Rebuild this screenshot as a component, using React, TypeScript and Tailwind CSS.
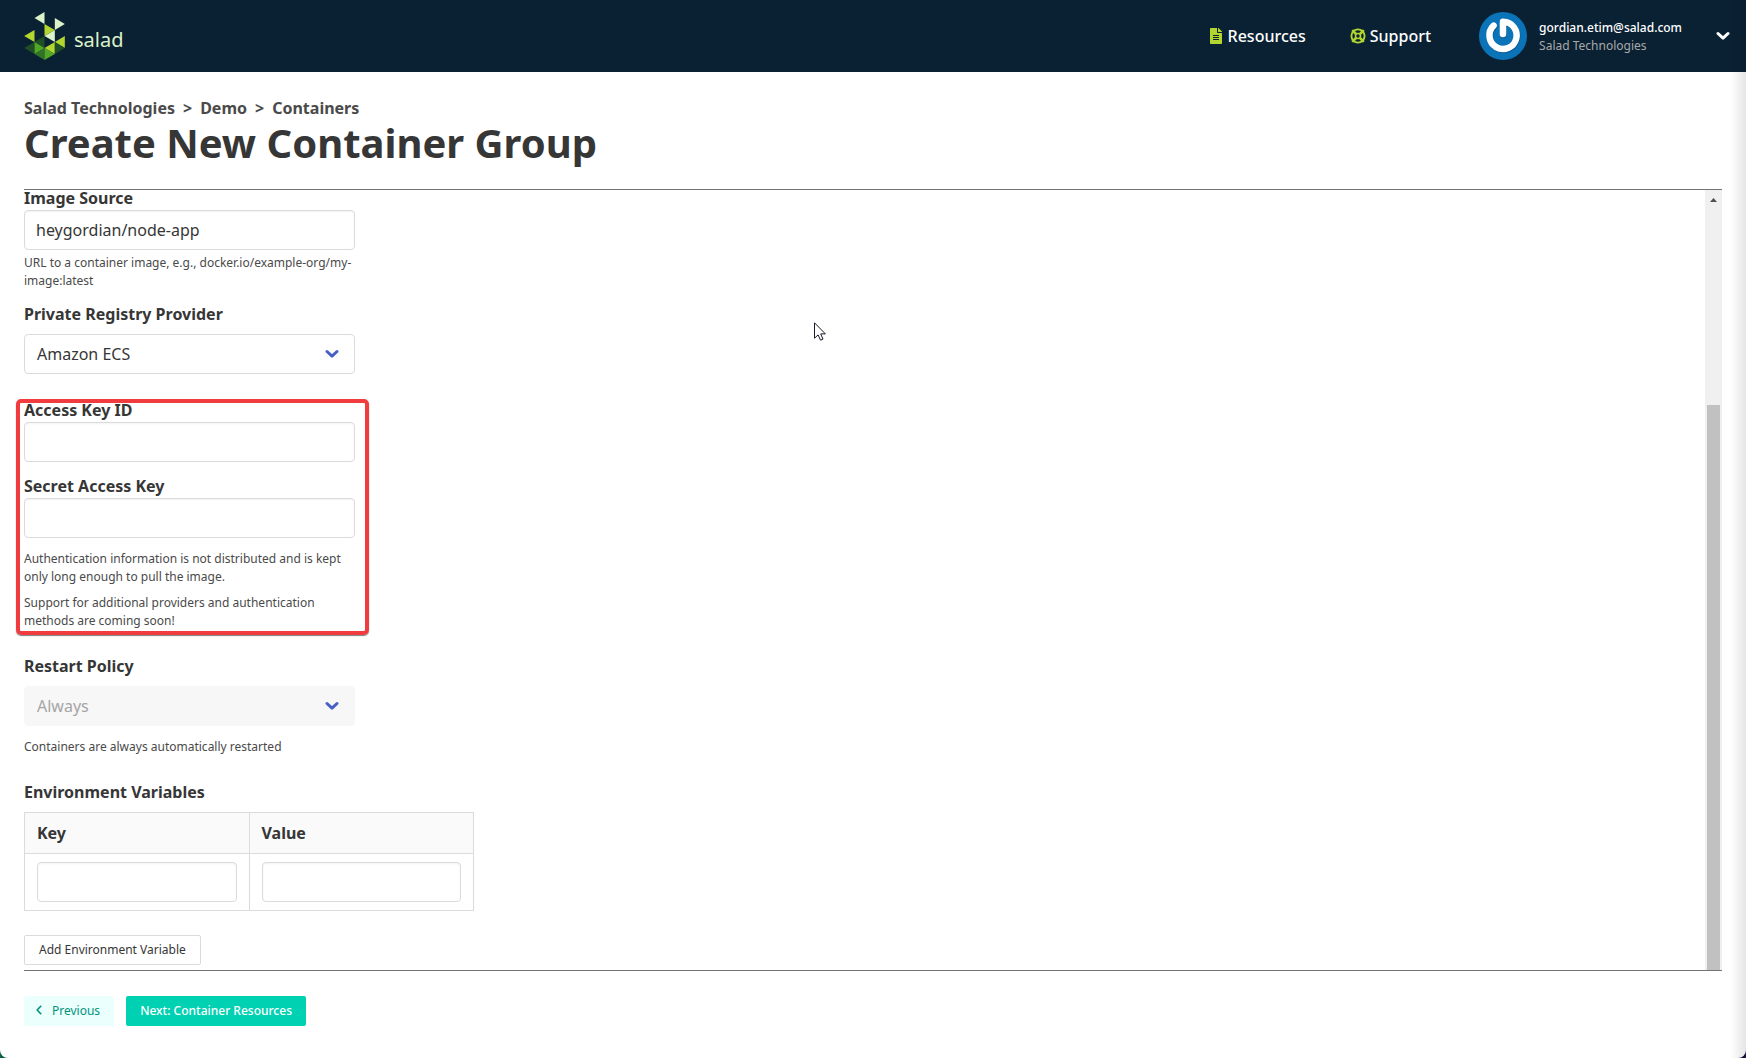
import type { ReactNode } from 'react';
import { FaFileAlt } from 'react-icons/fa';

function Logo() {
  return (
    <svg viewBox="0 0 122 144" className="h-12 w-[41px]" aria-hidden="true">
      <g fill="#dcf2c8">
        <path d="M61 0V36L31 18z" />
        <path d="M92 18V54L122 36z" />
        <path d="M92 54V90L61 72z" />
      </g>
      <g fill="#b2d530">
        <path d="M61 36V72L92 54z" />
        <path d="M31 54V90L0 72z" />
        <path d="M122 72V108L92 90z" />
        <path d="M92 90V126L61 108z" />
      </g>
      <g fill="#1f4f24">
        <path d="M61 72V108L31 90z" />
        <path d="M31 90V126L0 108z" />
        <path d="M92 90V126L122 108z" />
      </g>
      <path d="M61 108V144L31 126z" fill="#2f7426" />
      <g fill="#53a626">
        <path d="M31 90V126L61 108z" />
        <path d="M61 108V144L92 126z" />
      </g>
    </svg>
  );
}

function LifeRing() {
  return (
    <svg viewBox="0 0 16 16" className="size-4 text-[#b2d530]" fill="none" stroke="currentColor" aria-hidden="true">
      <circle cx="8" cy="8" r="6.6" strokeWidth="1.9" />
      <circle cx="8" cy="8" r="2.5" strokeWidth="1.6" />
      <path d="M2.2 2.2L6 6M13.8 2.2L10 6M2.2 13.8L6 10M13.8 13.8L10 10" strokeWidth="2.6" />
    </svg>
  );
}

function Avatar() {
  return (
    <svg viewBox="0 0 48 48" className="size-12" aria-hidden="true">
      <circle cx="24" cy="24" r="24" fill="#0b74b8" />
      <g fill="none" strokeLinecap="round" strokeLinejoin="round" strokeWidth="6.5">
        <path d="M14.6 13.6A13.6 13.6 0 1 0 24 9.8V22" stroke="#075a91" transform="translate(0.6 1)" />
        <path d="M14.6 13.6A13.6 13.6 0 1 0 24 9.8V22" stroke="#fff" />
      </g>
    </svg>
  );
}

function Chevron({ className }: { className: string }) {
  return (
    <svg viewBox="0 0 14 10" className={className} fill="none" stroke="currentColor" strokeWidth="3" strokeLinecap="round" strokeLinejoin="round" aria-hidden="true">
      <path d="M2 2.5L7 7.2L12 2.5" />
    </svg>
  );
}

function Label({ htmlFor, children }: { htmlFor: string; children: ReactNode }) {
  return (
    <label htmlFor={htmlFor} className="block text-base/4 font-bold text-[#363636]">
      {children}
    </label>
  );
}

const inputClass =
  'block h-10 w-full rounded border border-[#dbdbdb] bg-white px-[11px] text-base text-[#363636] shadow-[inset_0_1px_2px_rgba(10,10,10,0.05)]';

function TextField({ id, label, value }: { id: string; label: string; value?: string }) {
  return (
    <div className="flex flex-col gap-1">
      <Label htmlFor={id}>{label}</Label>
      <input id={id} type="text" defaultValue={value} className={inputClass} />
    </div>
  );
}

function SelectField({ id, label, value, disabled }: { id: string; label: string; value: string; disabled?: boolean }) {
  return (
    <div className="flex flex-col gap-3">
      <Label htmlFor={id}>{label}</Label>
      <div className="relative">
        <select
          id={id}
          disabled={disabled}
          className="block h-10 w-full appearance-none rounded border border-[#dbdbdb] bg-white px-3 text-base text-[#363636] disabled:border-[#f7f7f7] disabled:bg-[#f7f7f7] disabled:text-[#a5a5a5] disabled:opacity-100"
        >
          <option>{value}</option>
        </select>
        <Chevron className="pointer-events-none absolute top-[15px] right-4 h-[10px] w-[14px] text-[#485fc7]" />
      </div>
    </div>
  );
}

function Help({ children }: { children: ReactNode }) {
  return <p className="text-xs/[18px] text-[#4a4a4a]">{children}</p>;
}

export default function App() {
  return (
    <div className="min-h-screen bg-linear-to-r from-[#0c6146] to-[#1d0b45] font-['Noto_Sans',sans-serif] text-[#4a4a4a]">
      <div className="relative flex min-h-screen flex-col overflow-hidden rounded-b-lg bg-white">
        <header className="flex h-[72px] shrink-0 items-center justify-between bg-[#0a2133] pr-4 pl-6">
          <a href="#home" className="flex items-center gap-[9px]">
            <Logo />
            <span className="pt-2 text-xl/6 text-[#dcf2c8]">salad</span>
          </a>
          <div className="flex items-center">
            <nav className="flex items-center gap-11 font-medium text-white">
              <a href="#resources" className="flex items-center gap-1.5">
                <FaFileAlt className="h-4 w-3 text-[#b2d530]" />
                Resources
              </a>
              <a href="#support" className="flex items-center gap-1">
                <LifeRing />
                Support
              </a>
            </nav>
            <button type="button" className="ml-12 flex items-center text-left">
              <Avatar />
              <span className="ml-3 flex flex-col pt-0.5 text-xs/[18px]">
                <span className="font-medium text-white">gordian.etim@salad.com</span>
                <span className="text-[#a9a9a9]">Salad Technologies</span>
              </span>
              <Chevron className="ml-[34px] h-[10px] w-[14px] text-white" />
            </button>
          </div>
        </header>

        <main className="flex grow flex-col px-6 pt-6 pb-8">
          <nav aria-label="Breadcrumb" className="flex gap-2 text-base/6 font-bold">
            <a href="#org">Salad Technologies</a>
            <span>&gt;</span>
            <a href="#demo">Demo</a>
            <span>&gt;</span>
            <a href="#containers">Containers</a>
          </nav>
          <h1 className="text-[40px]/[45px] font-bold text-[#363636]">Create New Container Group</h1>

          <div className="relative mt-6 flex justify-between border-y border-[#737373]">
            <form className="pb-[5px]">
              <div className="flex w-[331px] flex-col gap-7">
                <div className="flex flex-col gap-4">
                  <div className="flex flex-col gap-1">
                    <TextField id="image" label="Image Source" value="heygordian/node-app" />
                    <Help>URL to a container image, e.g., docker.io/example-org/my-image:latest</Help>
                  </div>
                  <SelectField id="registry" label="Private Registry Provider" value="Amazon ECS" />
                </div>

                <div className="relative flex flex-col gap-3">
                  <div className="flex flex-col gap-4">
                    <TextField id="access-key" label="Access Key ID" />
                    <TextField id="secret-key" label="Secret Access Key" />
                  </div>
                  <div className="flex flex-col gap-2">
                    <Help>Authentication information is not distributed and is kept only long enough to pull the image.</Help>
                    <Help>Support for additional providers and authentication methods are coming soon!</Help>
                  </div>
                  <div className="pointer-events-none absolute -top-[3px] -right-[14px] -bottom-[5px] -left-2 rounded-[5px] border-4 border-[#f03c3e] shadow-[0_1px_1px_rgba(0,0,0,0.5)]" />
                </div>

                <div className="flex flex-col gap-3">
                  <SelectField id="restart" label="Restart Policy" value="Always" disabled />
                  <Help>Containers are always automatically restarted</Help>
                </div>
              </div>

              <h2 className="mt-7 text-base/4 font-bold text-[#363636]">Environment Variables</h2>
              <table className="mt-3 w-[450px] table-fixed border-collapse text-left text-[#363636]">
                <thead className="bg-[#fafafa]">
                  <tr className="h-[41px]">
                    <th id="env-key" className="border border-[#dbdbdb] px-3 font-bold">Key</th>
                    <th id="env-value" className="border border-[#dbdbdb] px-3 font-bold">Value</th>
                  </tr>
                </thead>
                <tbody>
                  <tr>
                    <td className="border border-[#dbdbdb] px-3 py-2">
                      <input type="text" aria-labelledby="env-key" className={inputClass} />
                    </td>
                    <td className="border border-[#dbdbdb] px-3 py-2">
                      <input type="text" aria-labelledby="env-value" className={inputClass} />
                    </td>
                  </tr>
                </tbody>
              </table>
              <button type="button" className="mt-6 block h-[30px] rounded-xs border border-[#dbdbdb] bg-white px-3.5 text-xs text-[#363636]">
                Add Environment Variable
              </button>
            </form>

            <div className="flex w-[17px] flex-col items-center bg-[#f0f0f0]" aria-hidden="true">
              <div className="flex h-[215px] justify-center pt-2">
                <svg viewBox="0 0 7 4" className="h-1 w-[7px]" fill="#505050">
                  <path d="M3.5 0L7 4H0z" />
                </svg>
              </div>
              <div className="w-[13px] grow bg-[#c1c1c1]" />
            </div>

            <svg viewBox="0 0 12 19" className="pointer-events-none absolute top-[132px] left-[790px] h-[19px] w-3" aria-hidden="true">
              <path d="M.5 .8V16.2L4.1 12.9L6.5 18.2L9 17.1L6.7 11.9H11.4z" fill="#fff" stroke="#1a1a2a" strokeWidth="1" />
            </svg>
          </div>

          <div className="mt-[25px] flex gap-3 text-xs">
            <button type="button" className="flex h-[30px] items-center rounded-xs bg-[#ebfffc] pr-3.5 pl-3 text-[#00947e]">
              <svg viewBox="0 0 6 10" className="mr-[10px] mb-0.5 h-[10px] w-1.5" fill="none" stroke="currentColor" strokeWidth="1.6" aria-hidden="true">
                <path d="M5.2 .8L1.2 5L5.2 9.2" />
              </svg>
              Previous
            </button>
            <button type="button" className="h-[30px] rounded-xs bg-[#00d1b2] px-3.5 font-medium text-white">
              Next: Container Resources
            </button>
          </div>
        </main>
        <div className="pointer-events-none absolute inset-y-0 right-0 w-4 bg-linear-to-r from-transparent to-black/10" />
      </div>
    </div>
  );
}
